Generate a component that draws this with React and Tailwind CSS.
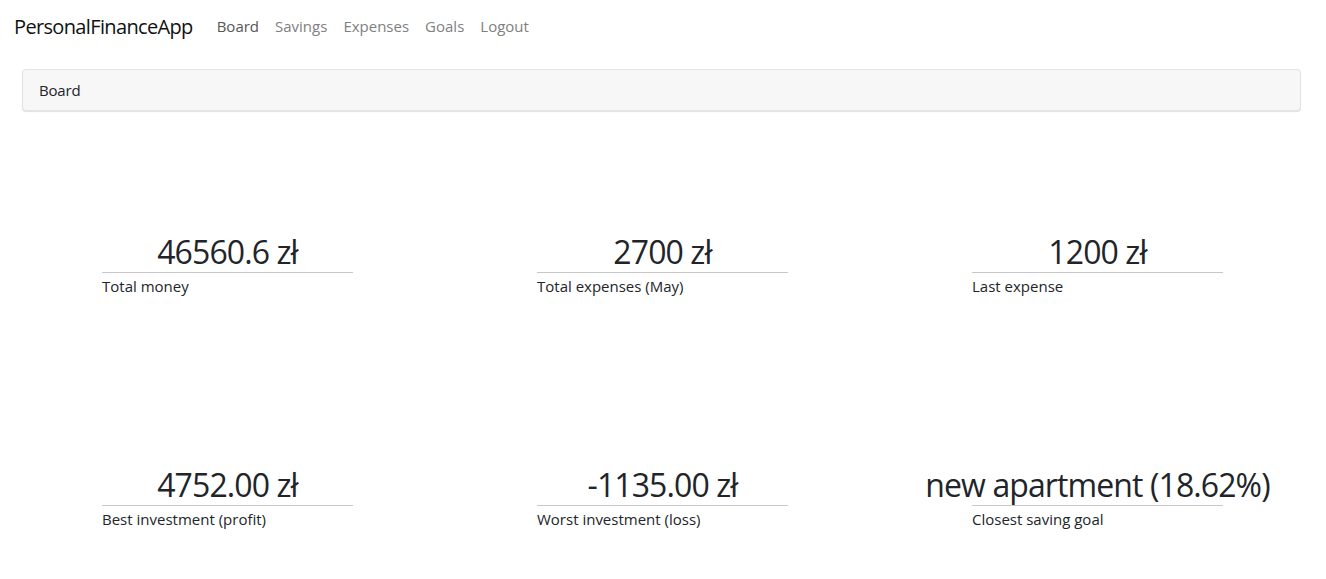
const stats = [
  { value: "46560.6 zł", label: "Total money" },
  { value: "2700 zł", label: "Total expenses (May)" },
  { value: "1200 zł", label: "Last expense" },
  { value: "4752.00 zł", label: "Best investment (profit)" },
  { value: "-1135.00 zł", label: "Worst investment (loss)" },
  { value: "new apartment (18.62%)", label: "Closest saving goal" },
];

const navLinks = ["Board", "Savings", "Expenses", "Goals", "Logout"];

const StatCard = ({ value, label }) => (
  <div className="flex justify-center">
    <div className="w-[251px]">
      <div className="border-b border-[#c8c8c8] flex justify-center pb-[2px]">
        <span className="whitespace-nowrap text-[32px] leading-[37px] tracking-[-0.9px] text-[#212529]">{value}</span>
      </div>
      <div className="text-[15px] leading-[24px] pt-[1px] text-[#212529]">{label}</div>
    </div>
  </div>
);

export default function App() {
  return (
    <div className="min-h-[579px] bg-white font-['Open_Sans','Noto_Sans',sans-serif]">
      {/* Navbar */}
      <nav className="flex items-center h-[53px] px-[14px]">
        <span className="text-[20px] text-[#111] tracking-[-0.65px] mr-[16px]">PersonalFinanceApp</span>
        <div className="flex items-center">
          {navLinks.map((name) => (
            <a
              key={name}
              href="#"
              className={`px-[8px] text-[15px] ${
                name === "Board" ? "text-[#555]" : "text-[#808080]"
              }`}
            >
              {name}
            </a>
          ))}
        </div>
      </nav>

      {/* Breadcrumb */}
      <div className="ml-[22px] mr-[25px] mt-[16px] h-[42px] flex items-center px-[16px] bg-[#f7f7f7] border border-[#e3e3e3] rounded-[4px] shadow-[0_1px_1px_rgba(0,0,0,0.12)]">
        <span className="text-[15px] text-[#212529] tracking-[-0.2px]">Board</span>
      </div>

      {/* Stats */}
      <div className="mx-[10px] mt-[122px] grid grid-cols-3 grid-rows-[233px_auto] w-[1305px]">
        {stats.map((s) => (
          <StatCard key={s.label} value={s.value} label={s.label} />
        ))}
      </div>
    </div>
  );
}
